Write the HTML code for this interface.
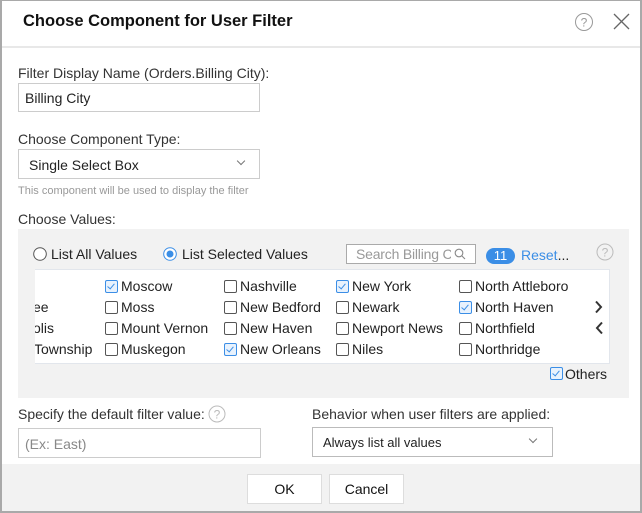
<!DOCTYPE html>
<html><head><style>
*{box-sizing:border-box;margin:0;padding:0}
body{width:642px;height:513px;overflow:hidden;background:#fff;font-family:"Liberation Sans",sans-serif;color:#222;position:relative}
.a{position:absolute;white-space:nowrap}
.frame{position:absolute;left:0;top:0;width:642px;height:513px;border:2px solid #a9a9a9;border-top-width:1px;pointer-events:none}
.lbl{font-size:14px;color:#333}
.inp{position:absolute;border:1px solid #ccc;background:#fff;font-size:14px}
.cb{position:absolute;width:13px;height:13px;border:1px solid #555;border-radius:2px;background:#fff}
.cb.on{border-color:#3b8ee6;background:#e8f2fd}
.cb.on::after{content:"";position:absolute;left:3px;top:1px;width:3px;height:6px;border:solid #3b8ee6;border-width:0 1.5px 1.5px 0;transform:rotate(40deg)}
.t{position:absolute;font-size:14px;color:#222;white-space:nowrap}
.chev{position:absolute;width:7px;height:7px;border:solid #666;border-width:0 1.2px 1.2px 0;transform:rotate(45deg)}
</style></head><body>
<div class="a" style="left:23px;top:12px;font-size:16.5px;font-weight:bold;color:#111">Choose Component for User Filter</div>
<svg class="a" style="left:574px;top:12px" width="20" height="20"><circle cx="10" cy="10" r="8.5" fill="none" stroke="#999" stroke-width="1"/><text x="10" y="14.5" font-size="12" text-anchor="middle" fill="#999" font-family="Liberation Sans">?</text></svg>
<svg class="a" style="left:613px;top:13px" width="17" height="17"><path d="M1 1L16 16M16 1L1 16" stroke="#666" stroke-width="1.3"/></svg>
<div class="a" style="left:0;top:46px;width:642px;height:2px;background:#e8e8e8"></div>

<div class="a lbl" style="left:18px;top:65px">Filter Display Name (Orders.Billing City):</div>
<div class="inp" style="left:18px;top:83px;width:242px;height:29px;padding:6px 6px">Billing City</div>
<div class="a lbl" style="left:18px;top:131px">Choose Component Type:</div>
<div class="inp" style="left:18px;top:149px;width:242px;height:30px;padding:7px 10px">Single Select Box</div>
<div class="chev" style="left:238px;top:158px;width:6px;height:6px;border-color:#777"></div>
<div class="a" style="left:18px;top:185px;font-size:11px;color:#999">This component will be used to display the filter</div>
<div class="a lbl" style="left:18px;top:211px">Choose Values:</div>

<div class="a" style="left:18px;top:229px;width:611px;height:169px;background:#f2f2f2"></div>
<svg class="a" style="left:33px;top:247px" width="14" height="14"><circle cx="7" cy="7" r="6.3" fill="#fff" stroke="#555"/></svg>
<div class="t" style="left:51px;top:246px">List All Values</div>
<svg class="a" style="left:163px;top:247px" width="14" height="14"><circle cx="7" cy="7" r="6.3" fill="#fff" stroke="#3b8ee6"/><circle cx="7" cy="7" r="3.5" fill="#3b8ee6"/></svg>
<div class="t" style="left:182px;top:246px">List Selected Values</div>
<div class="inp" style="left:346px;top:244px;width:130px;height:20px;border-color:#aaa"></div>
<div class="a" style="left:356px;top:246px;width:95px;overflow:hidden;font-size:14px;color:#999;letter-spacing:-0.2px">Search Billing City</div>
<svg class="a" style="left:454px;top:248px" width="12" height="12"><circle cx="5" cy="5" r="3.8" fill="none" stroke="#888" stroke-width="1.1"/><path d="M8 8L11 11" stroke="#888" stroke-width="1.1"/></svg>
<div class="a" style="left:486px;top:248px;width:29px;height:16px;border-radius:8px;background:#3b8ee6;color:#fff;font-size:13px;text-align:center;line-height:16px">11</div>
<div class="t" style="left:521px;top:247px;color:#3b8ee6">Reset<span style="color:#222">...</span></div>
<svg class="a" style="left:596px;top:243px" width="18" height="18"><circle cx="9" cy="9" r="8" fill="none" stroke="#bbb"/><text x="9" y="13.5" font-size="12" text-anchor="middle" fill="#bbb" font-family="Liberation Sans">?</text></svg>

<div class="a" style="left:35px;top:269px;width:575px;height:95px;background:#fff;border:1px solid #e2e6ec;border-left:none;overflow:hidden">
<div class="t" style="left:-2px;top:29px">ee</div>
<div class="t" style="left:-2px;top:50px">olis</div>
<div class="t" style="left:-1px;top:71px">Township</div>
</div>
<div class="cb on" style="left:105px;top:280px"></div><div class="t" style="left:121px;top:278px">Moscow</div>
<div class="cb" style="left:105px;top:301px"></div><div class="t" style="left:121px;top:299px">Moss</div>
<div class="cb" style="left:105px;top:322px"></div><div class="t" style="left:121px;top:320px">Mount Vernon</div>
<div class="cb" style="left:105px;top:343px"></div><div class="t" style="left:121px;top:341px">Muskegon</div>
<div class="cb" style="left:224px;top:280px"></div><div class="t" style="left:240px;top:278px">Nashville</div>
<div class="cb" style="left:224px;top:301px"></div><div class="t" style="left:240px;top:299px">New Bedford</div>
<div class="cb" style="left:224px;top:322px"></div><div class="t" style="left:240px;top:320px">New Haven</div>
<div class="cb on" style="left:224px;top:343px"></div><div class="t" style="left:240px;top:341px">New Orleans</div>
<div class="cb on" style="left:336px;top:280px"></div><div class="t" style="left:352px;top:278px">New York</div>
<div class="cb" style="left:336px;top:301px"></div><div class="t" style="left:352px;top:299px">Newark</div>
<div class="cb" style="left:336px;top:322px"></div><div class="t" style="left:352px;top:320px">Newport News</div>
<div class="cb" style="left:336px;top:343px"></div><div class="t" style="left:352px;top:341px">Niles</div>
<div class="cb" style="left:459px;top:280px"></div><div class="t" style="left:475px;top:278px">North Attleboro</div>
<div class="cb on" style="left:459px;top:301px"></div><div class="t" style="left:475px;top:299px">North Haven</div>
<div class="cb" style="left:459px;top:322px"></div><div class="t" style="left:475px;top:320px">Northfield</div>
<div class="cb" style="left:459px;top:343px"></div><div class="t" style="left:475px;top:341px">Northridge</div>
<svg class="a" style="left:594px;top:300px" width="10" height="14"><path d="M2 1.5L7 7L2 12.5" fill="none" stroke="#333" stroke-width="2"/></svg>
<svg class="a" style="left:594px;top:321px" width="10" height="14"><path d="M8 1.5L3 7L8 12.5" fill="none" stroke="#333" stroke-width="2"/></svg>
<div class="cb on" style="left:550px;top:367px"></div><div class="t" style="left:565px;top:366px">Others</div>

<div class="a lbl" style="left:18px;top:406px">Specify the default filter value:</div>
<svg class="a" style="left:208px;top:405px" width="18" height="18"><circle cx="9" cy="9" r="8" fill="none" stroke="#bbb"/><text x="9" y="13.5" font-size="12" text-anchor="middle" fill="#bbb" font-family="Liberation Sans">?</text></svg>
<div class="inp" style="left:18px;top:428px;width:243px;height:30px;padding:7px 6px;color:#888">(Ex: East)</div>
<div class="a lbl" style="left:312px;top:406px">Behavior when user filters are applied:</div>
<div class="inp" style="left:312px;top:427px;width:241px;height:30px;padding:7px 10px;border-color:#bbb;font-size:13px">Always list all values</div>
<div class="chev" style="left:530px;top:436px;width:6px;height:6px;border-color:#777"></div>

<div class="a" style="left:0;top:464px;width:642px;height:49px;background:#f2f2f2"></div>
<div class="inp" style="left:247px;top:474px;width:75px;height:30px;text-align:center;line-height:28px;border-color:#ddd;color:#111">OK</div>
<div class="inp" style="left:329px;top:474px;width:75px;height:30px;text-align:center;line-height:28px;border-color:#ddd;color:#111">Cancel</div>
<div class="frame"></div>
</body></html>
